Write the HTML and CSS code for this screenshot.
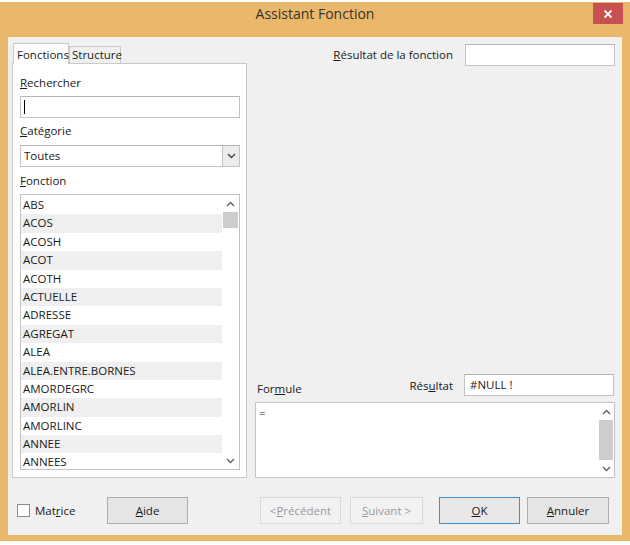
FILE: index.html
```html
<!DOCTYPE html>
<html lang="fr">
<head>
<meta charset="utf-8">
<title>Assistant Fonction</title>
<link rel="stylesheet" href="styles.css">
</head>
<body>
<div class="window">
  <div class="titlebar">
    <span class="title">Assistant Fonction</span>
    <div class="close"><svg width="10" height="10" viewBox="0 0 10 10"><path d="M1.5 1.5 L8.5 8.5 M8.5 1.5 L1.5 8.5" stroke="#fff" stroke-width="1.8"/></svg></div>
  </div>
  <div class="client">
    <div class="main">
      <div class="left">
        <div class="tabs">
          <div class="tab active">Fonctions</div>
          <div class="tab">Structure</div>
        </div>
        <div class="panel">
          <div class="lbl"><u>R</u>echercher</div>
          <div class="field search"><span class="caret"></span></div>
          <div class="lbl lbl-cat"><u>C</u>atégorie</div>
          <div class="field select"><span class="val">Toutes</span><span class="dd"><svg width="9" height="6" viewBox="0 0 9 6"><path d="M1 1 L4.5 4.5 L8 1" fill="none" stroke="#444" stroke-width="1.4"/></svg></span></div>
          <div class="lbl lbl-fn"><u>F</u>onction</div>
          <div class="list">
            <div class="items">
              <div class="item">ABS</div>
              <div class="item alt">ACOS</div>
              <div class="item">ACOSH</div>
              <div class="item alt">ACOT</div>
              <div class="item">ACOTH</div>
              <div class="item alt">ACTUELLE</div>
              <div class="item">ADRESSE</div>
              <div class="item alt">AGREGAT</div>
              <div class="item">ALEA</div>
              <div class="item alt">ALEA.ENTRE.BORNES</div>
              <div class="item">AMORDEGRC</div>
              <div class="item alt">AMORLIN</div>
              <div class="item">AMORLINC</div>
              <div class="item alt">ANNEE</div>
              <div class="item">ANNEES</div>
            </div>
            <div class="vscroll">
              <span class="arrow"><svg width="9" height="6" viewBox="0 0 9 6"><path d="M1 5 L4.5 1.5 L8 5" fill="none" stroke="#606060" stroke-width="1.4"/></svg></span>
              <span class="thumb list-thumb"></span>
              <span class="track"></span>
              <span class="arrow"><svg width="9" height="6" viewBox="0 0 9 6"><path d="M1 1 L4.5 4.5 L8 1" fill="none" stroke="#606060" stroke-width="1.4"/></svg></span>
            </div>
          </div>
        </div>
      </div>
      <div class="right">
        <div class="res-row">
          <span class="res-lbl"><u>R</u>ésultat de la fonction</span>
          <div class="field box"></div>
        </div>
        <div class="spacer"></div>
        <div class="formula-head">
          <span class="f-lbl">For<u>m</u>ule</span>
          <span class="r-lbl">Rés<u>u</u>ltat</span>
          <div class="field box">#NULL !</div>
        </div>
        <div class="formula">
          <div class="ftext">=</div>
          <div class="vscroll">
            <span class="arrow"><svg width="9" height="6" viewBox="0 0 9 6"><path d="M1 5 L4.5 1.5 L8 5" fill="none" stroke="#606060" stroke-width="1.4"/></svg></span>
            <span class="thumb f-thumb"></span>
            <span class="arrow"><svg width="9" height="6" viewBox="0 0 9 6"><path d="M1 1 L4.5 4.5 L8 1" fill="none" stroke="#606060" stroke-width="1.4"/></svg></span>
          </div>
        </div>
      </div>
    </div>
    <div class="buttons">
      <div class="check"><span class="cbox"></span><span>Mat<u>r</u>ice</span></div>
      <div class="btn aide"><u>A</u>ide</div>
      <div class="btn disabled prev">&lt;<u>P</u>récédent</div>
      <div class="btn disabled next"><u>S</u>uivant &gt;</div>
      <div class="btn ok"><u>O</u>K</div>
      <div class="btn cancel"><u>A</u>nnuler</div>
    </div>
  </div>
</div>
</body>
</html>
```

FILE: styles.css
```css
* { box-sizing: border-box; }
html, body { margin: 0; padding: 0; }
body {
  background: #ffffff;
  width: 630px;
  height: 545px;
  overflow: hidden;
  font-family: "Open Sans", "Noto Sans", sans-serif;
  font-size: 11.5px;
  color: #1a1a1a;
}
u { text-decoration: underline; text-underline-offset: 1px; }

.window {
  margin-top: 2px;
  width: 630px;
  height: 539px;
  background: #eab86c;
  padding: 0 8px 6px 8px;
  display: flex;
  flex-direction: column;
}
.titlebar {
  height: 35px;
  display: flex;
  justify-content: center;
  position: relative;
}
.title {
  font-size: 14px;
  color: #3a3226;
  line-height: 16px;
  margin-top: 4px;
}
.close {
  position: absolute;
  right: -1px;
  top: 1px;
  width: 30px;
  height: 21px;
  background: #c75050;
  display: flex;
  align-items: center;
  justify-content: center;
}

.client {
  flex: 1;
  background: #f0f0f0;
  padding: 6px 7px 11px 4px;
  display: flex;
  flex-direction: column;
}
.main {
  display: flex;
  gap: 8px;
}
.left { width: 235px; display: flex; flex-direction: column; }
.tabs {
  height: 20px;
  display: flex;
  align-items: flex-end;
  padding-left: 1px;
}
.tab {
  height: 17px;
  padding: 0 2px;
  border: 1px solid #c9c9c9;
  border-bottom: none;
  background: #f0f0f0;
  line-height: 16px;
  width: 52px;
}
.tab.active {
  height: 21px;
  width: 56px;
  margin-bottom: -1px;
  background: #ffffff;
  line-height: 21px;
  padding-left: 3px;
  position: relative;
  z-index: 1;
}
.panel {
  border: 1px solid #c9c9c9;
  background: #ffffff;
  padding: 10px 6px 7px 7px;
  display: flex;
  flex-direction: column;
}
.lbl { line-height: 18px; height: 18px; }
.lbl-cat { margin-top: 4px; }
.lbl-fn { margin-top: 5px; }
.field {
  height: 22px;
  border: 1px solid #c3c3c3;
  border-top-color: #b4b4b4;
  background: #fff;
}
.search { margin-top: 4px; padding: 3px 3px; }
.caret { display: block; width: 1px; height: 14px; background: #000; }
.select {
  margin-top: 5px;
  display: flex;
  justify-content: space-between;
  align-items: stretch;
}
.select .val { padding-left: 3px; line-height: 20px; }
.dd {
  width: 17px;
  border-left: 1px solid #c3c3c3;
  background: #ececec;
  display: flex;
  align-items: center;
  justify-content: center;
}
.list {
  margin-top: 4px;
  height: 276px;
  border: 1px solid #c3c3c3;
  background: #fff;
  display: flex;
}
.items { flex: 1; padding-top: 1px; }
.item {
  height: 18.4px;
  line-height: 18.4px;
  padding-left: 2px;
}
.item.alt { background: #efefef; }
.vscroll {
  width: 17px;
  display: flex;
  flex-direction: column;
  background: #fff;
}
.arrow {
  height: 17px;
  display: flex;
  align-items: center;
  justify-content: center;
}
.thumb { background: #cdcdcd; margin: 0 1px; }
.list-thumb { height: 16px; }
.track { flex: 1; }

.right {
  flex: 1;
  display: flex;
  flex-direction: column;
}
.res-row {
  margin-top: 1px;
  display: flex;
  justify-content: flex-end;
  align-items: center;
  gap: 12px;
}
.res-lbl { line-height: 18px; }
.box { width: 150px; padding-left: 5px; line-height: 20px; }
.spacer { flex: 1; }
.formula-head {
  display: flex;
  align-items: center;
  margin-right: 1px;
}
.f-lbl { margin-left: 2px; margin-top: 6px; flex: 1; }
.r-lbl { margin-right: 11px; }
.formula {
  margin-top: 6px;
  height: 76px;
  border: 1px solid #c3c3c3;
  background: #fff;
  display: flex;
}
.ftext { flex: 1; padding: 2px 3px; line-height: 16px; }
.formula .vscroll { width: 16px; }
.f-thumb { flex: 1; }

.buttons {
  margin-top: 19px;
  height: 27px;
  display: flex;
  align-items: center;
  padding-left: 5px;
}
.check { display: flex; align-items: center; gap: 5px; width: 90px; }
.cbox {
  width: 13px;
  height: 13px;
  border: 1px solid #8d8d8d;
  background: #fff;
}
.btn {
  width: 81px;
  height: 27px;
  border: 1px solid #adadad;
  background: #e5e5e5;
  display: flex;
  align-items: center;
  justify-content: center;
}
.aide { margin-left: 0; }
.prev { margin-left: 72px; }
.next { margin-left: 9px; width: 73px; }
.ok { margin-left: 16px; border-color: #3c8fd1; background: #e8e8e8; }
.cancel { margin-left: 7px; width: 82px; }
.btn.disabled {
  color: #9a9a9a;
  background: #f2f2f2;
  border-color: #d9d9d9;
}
```
